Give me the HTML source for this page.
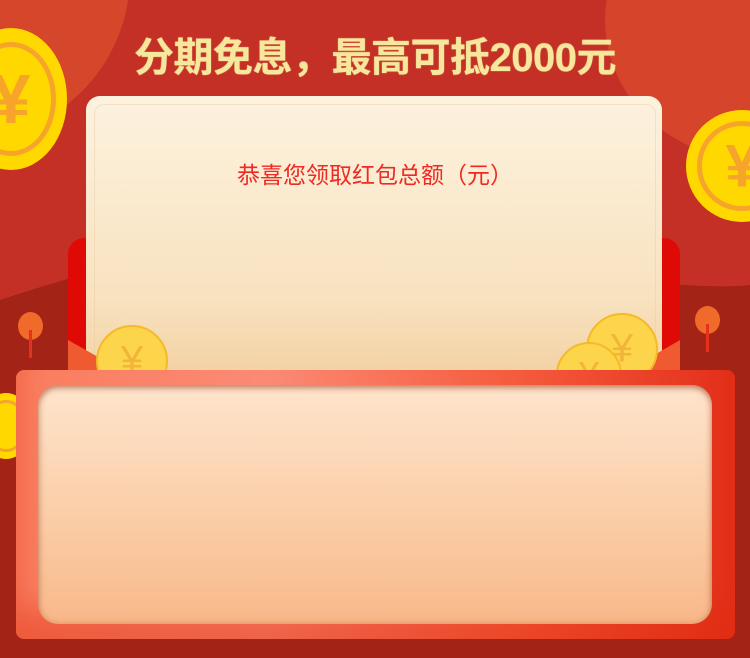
<!DOCTYPE html>
<html><head><meta charset="utf-8"><style>
html,body{margin:0;padding:0}
body{width:750px;height:658px;overflow:hidden;position:relative;background:#c43026;font-family:"Liberation Sans","Noto Sans CJK SC",sans-serif}
.abs{position:absolute}
.coin{position:absolute;border-radius:50%;background:#ffd800;box-sizing:border-box;overflow:hidden}
.coin i{position:absolute;inset:10%;border-radius:50%;border:5px solid #f7a52a}
.coin b{position:absolute;left:0;right:0;top:50%;transform:translateY(-50%);text-align:center;color:#f7a52a;font-weight:bold}
.gc b{color:#f2b53a;font-weight:normal}
</style></head><body>
<div class="abs" style="left:-200px;top:-190px;width:330px;height:330px;border-radius:50%;background:#d6462b"></div>
<div class="abs" style="left:605px;top:-120px;width:300px;height:280px;border-radius:50%;background:#d6442b"></div>
<svg class="abs" style="left:0;top:0" width="750" height="658">
<path d="M0 300 C60 280 130 260 200 250 C300 240 420 250 520 265 C620 280 700 290 750 285 L750 658 L0 658Z" fill="#a32317"/>
</svg>
<div class="abs" style="left:18px;top:312px;width:25px;height:28px;border-radius:50%;background:#f06a2a"></div>
<div class="abs" style="left:29px;top:330px;width:3px;height:28px;background:#e5321e"></div>
<div class="abs" style="left:695px;top:306px;width:25px;height:28px;border-radius:50%;background:#f06a2a"></div>
<div class="abs" style="left:706px;top:324px;width:3px;height:28px;background:#e5321e"></div>
<div class="coin" style="left:-45px;top:28px;width:112px;height:142px;"><i></i><b style="font-size:70px">¥</b></div>
<div class="coin" style="left:686px;top:110px;width:112px;height:112px;"><i></i><b style="font-size:60px">¥</b></div>
<div class="coin" style="left:-20px;top:393px;width:52px;height:66px;"><i style="border-width:3px"></i></div>
<div class="abs" style="left:68px;top:238px;width:612px;height:150px;border-radius:16px 16px 0 0;background:#df0a05"></div>
<div class="abs" style="left:0;width:750px;top:32px;text-align:center;font-size:40px;font-weight:bold;color:#f6e79c;line-height:52px;letter-spacing:-0.5px;text-shadow:0 0 1px #f6e79c">分期免息，最高可抵2000元</div>
<div class="abs" style="left:86px;top:96px;width:576px;height:290px;border-radius:14px;background:linear-gradient(#fdf2df,#f8e2bf 70%,#f2cf9f)"></div>
<div class="abs" style="left:94px;top:104px;width:560px;height:280px;border-radius:10px;border:1px solid rgba(230,200,160,.4)"></div>
<div class="abs" style="left:0;width:750px;top:160px;text-align:center;font-size:23px;color:#ee2a22;line-height:30px">恭喜您领取红包总额（元）</div>
<svg class="abs" style="left:0;top:0" width="750" height="658">
<path d="M68 340 L130 375 L68 375Z" fill="#f05a30"/>
<path d="M680 340 L620 375 L680 375Z" fill="#f05a30"/>
</svg>
<div class="coin gc" style="left:96px;top:325px;width:72px;height:72px;background:#fcd54a;border:2px solid #f5b92a"><b style="font-size:40px">¥</b></div>
<div class="coin gc" style="left:586px;top:313px;width:72px;height:72px;background:#fcd54a;border:2px solid #f5b92a"><b style="font-size:40px">¥</b></div>
<div class="coin gc" style="left:556px;top:342px;width:66px;height:66px;background:#fcd54a;border:2px solid #f5b92a"><b style="font-size:36px">¥</b></div>
<div class="abs" style="left:16px;top:370px;width:719px;height:269px;border-radius:8px;background:linear-gradient(90deg,#fa7d5e,#fb8a74 35%,#f55a3c 70%,#e3301a);box-shadow:inset 0 -30px 30px rgba(220,40,10,.4)"></div>
<div class="abs" style="left:38px;top:385px;width:674px;height:239px;border-radius:20px;background:linear-gradient(#fee4cc,#fbd0ab 50%,#f8b88a);box-shadow:inset 0 3px 6px rgba(150,60,30,.5),inset 0 0 8px rgba(200,100,60,.35)"></div>
</body></html>
